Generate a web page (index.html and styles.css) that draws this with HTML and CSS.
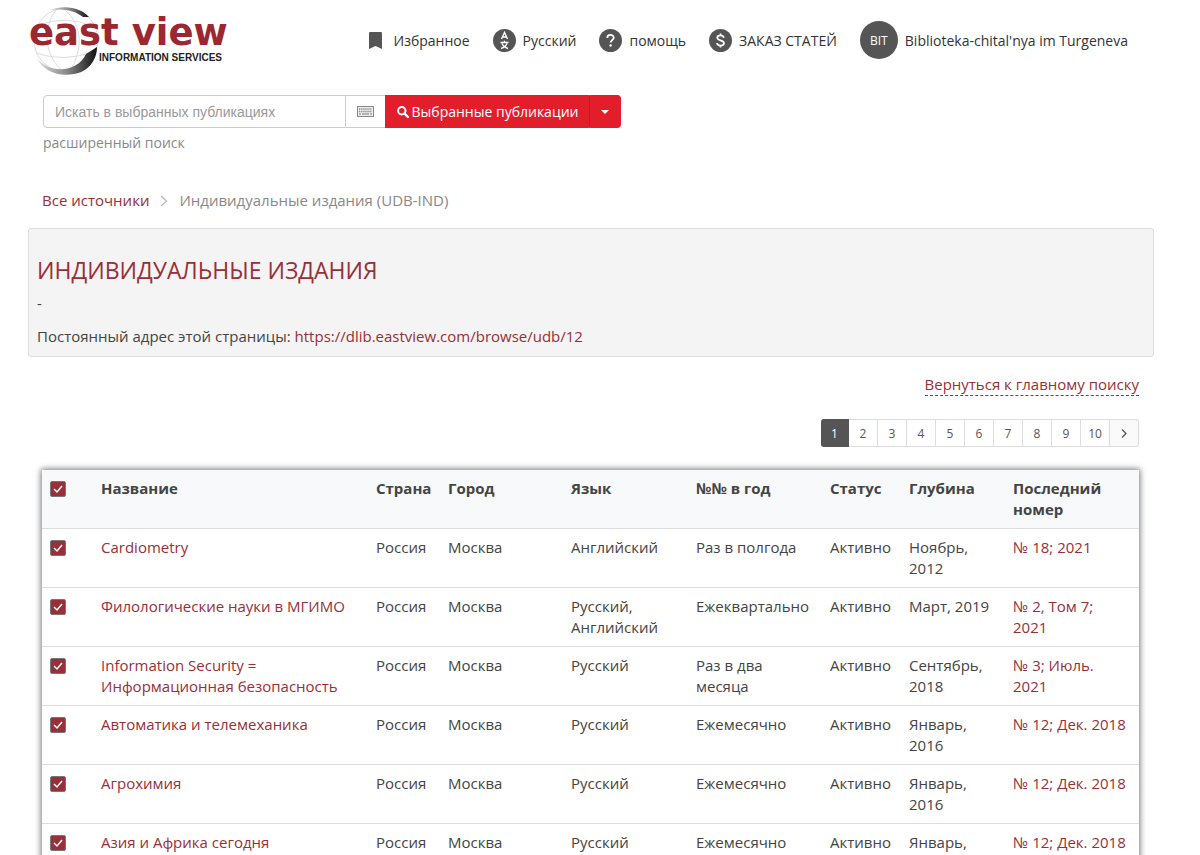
FILE: index.html
```html
<!DOCTYPE html>
<html lang="ru">
<head>
<meta charset="utf-8">
<meta name="viewport" content="width=device-width, initial-scale=1">
<title>Индивидуальные издания</title>
<link rel="stylesheet" href="styles.css">
</head>
<body>
<div class="page">
  <header class="header">
    <a class="logo" href="#" aria-label="East View Information Services">
      <svg width="204" height="72" viewBox="0 0 204 72">
        <defs>
          <linearGradient id="rim" x1="0" y1="0" x2="1" y2="0">
            <stop offset="0" stop-color="#ddd"/><stop offset=".5" stop-color="#888"/><stop offset="1" stop-color="#111"/>
          </linearGradient>
        </defs>
        <g fill="none" stroke="#ddd" stroke-width="1">
          <circle cx="38" cy="36" r="32"/>
          <path d="M30 4C14 20 15 52 36 68M34 4C55 18 56 46 41 68M11 21Q38 11 64 22M8 49Q36 59 68 47"/>
        </g>
        <path d="M22 6C36 0 54 4 61 13L55 13C48 7 36 4 22 6Z" fill="url(#rim)"/>
        <path d="M9 54C22 71 50 68 58 50L69 43C69 56 60 68 46 70C30 73 15 67 9 54Z" fill="url(#rim)"/>
        <text class="logo-name" x="1" y="41">east view</text>
        <text class="logo-sub" x="71" y="57">INFORMATION SERVICES</text>
      </svg>
    </a>
    <nav class="nav">
      <a class="nav-item nav-item-bookmark" href="#">
        <svg width="13" height="17" viewBox="0 0 13 17"><path d="M1 0h11a1 1 0 0 1 1 1v16l-6.500-3L0 17V1a1 1 0 0 1 1-1z" fill="#555"/></svg>
        Избранное</a>
      <a class="nav-item" href="#">
        <svg width="23" height="23" viewBox="0 0 23 23"><circle cx="11.500" cy="11.500" r="11.500" fill="#555"/><g fill="none" stroke="#fff" stroke-width="1.400"><path d="M8.500 10L11.500 3.500L14.500 10M9.500 8h4M7.500 13.500h8M11.500 11.700v2M9 14.500C10 17 12 18.500 15 19.500M14 14.500C13 17 11 18.500 8 19.500"/></g></svg>
        Русский</a>
      <a class="nav-item" href="#">
        <svg width="23" height="23" viewBox="0 0 23 23"><circle cx="11.500" cy="11.500" r="11.500" fill="#555"/><path d="M8.300 9C8.300 5 14.700 5 14.700 8.800C14.700 11 11.600 11.200 11.600 13.600" fill="none" stroke="#fff" stroke-width="1.800"/><circle cx="11.600" cy="16.500" r="1.200" fill="#fff"/></svg>
        помощь</a>
      <a class="nav-item" href="#">
        <svg width="23" height="23" viewBox="0 0 23 23"><circle cx="11.500" cy="11.500" r="11.500" fill="#555"/><path d="M14.900 8.700C14.200 5.700 8.300 5.700 8.300 8.800C8.300 12 15 10.700 15 14.200C15 17.600 8.300 17.400 8 14M11.500 4.500v2.500M11.500 16v2.500" fill="none" stroke="#fff" stroke-width="1.700"/></svg>
        ЗАКАЗ СТАТЕЙ</a>
      <a class="nav-item" href="#"><span class="avatar">BIT</span>Biblioteka-chital'nya im Turgeneva</a>
    </nav>
  </header>

  <form class="search">
    <div class="search-row">
      <input class="search-input" type="text" placeholder="Искать в выбранных публикациях" aria-label="Поиск">
      <button class="search-keys" type="button" aria-label="Клавиатура">
        <svg width="17" height="11" viewBox="0 0 17 11"><rect x=".5" y=".5" width="16" height="10" fill="#eee" stroke="#888"/><path d="M2 3h13M2 5.500h13" stroke="#888" stroke-width="1.300" stroke-dasharray="1.300 .8"/><path d="M2 8h2M5 8h7M13 8h2" stroke="#777"/></svg>
      </button>
      <button class="search-submit" type="submit">
        <svg width="12" height="12" viewBox="0 0 12 12"><circle cx="4.800" cy="4.800" r="3.700" fill="none" stroke="#fff" stroke-width="2"/><path d="M7.500 7.500L11 11" stroke="#fff" stroke-width="2.400" stroke-linecap="round"/></svg>
        Выбранные публикации</button>
      <button class="search-more" type="button" aria-label="Ещё"><svg width="8" height="4" viewBox="0 0 8 4"><path d="M0 0h8L4 4z" fill="#fff"/></svg></button>
    </div>
    <a class="search-advanced" href="#">расширенный поиск</a>
  </form>

  <nav class="crumbs">
    <a href="#">Все источники</a>
    <svg width="8" height="12" viewBox="0 0 8 12"><path d="M1 1l5.500 5L1 11" fill="none" stroke="#bbb" stroke-width="1.300"/></svg>
    <span>Индивидуальные издания (UDB-IND)</span>
  </nav>

  <section class="panel">
    <h1>ИНДИВИДУАЛЬНЫЕ ИЗДАНИЯ</h1>
    <p>-</p>
    <p>Постоянный адрес этой страницы: <a href="#">https://dlib.eastview.com/browse/udb/12</a></p>
  </section>

  <main class="results">
    <a class="back" href="#">Вернуться к главному поиску</a>
    <nav class="pager">
      <a class="current" href="#">1</a><a href="#">2</a><a href="#">3</a><a href="#">4</a><a href="#">5</a><a href="#">6</a><a href="#">7</a><a href="#">8</a><a href="#">9</a><a href="#">10</a><a class="next" href="#" aria-label="Далее"><svg width="6" height="9" viewBox="0 0 6 9"><path d="M1 .5l4 4-4 4" fill="none" stroke="#555" stroke-width="1.300"/></svg></a>
    </nav>
    <table class="table">
      <colgroup><col class="c-check"><col><col class="c-country"><col class="c-city"><col class="c-lang"><col class="c-freq"><col class="c-status"><col class="c-depth"><col class="c-last"></colgroup>
      <thead>
        <tr><th><input type="checkbox" checked aria-label="Выбрать все"></th><th>Название</th><th>Страна</th><th>Город</th><th>Язык</th><th>№№ в год</th><th>Статус</th><th>Глубина</th><th>Последний номер</th></tr>
      </thead>
      <tbody>
        <tr><td><input type="checkbox" checked aria-label="Cardiometry"></td><td><a href="#">Cardiometry</a></td><td>Россия</td><td>Москва</td><td>Английский</td><td>Раз в полгода</td><td>Активно</td><td>Ноябрь, 2012</td><td><a href="#">№ 18; 2021</a></td></tr>
        <tr><td><input type="checkbox" checked aria-label="Филологические науки в МГИМО"></td><td><a href="#">Филологические науки в МГИМО</a></td><td>Россия</td><td>Москва</td><td>Русский, Английский</td><td>Ежеквартально</td><td>Активно</td><td>Март, 2019</td><td><a href="#">№ 2, Том 7; 2021</a></td></tr>
        <tr><td><input type="checkbox" checked aria-label="Information Security"></td><td><a href="#">Information Security = Информационная безопасность</a></td><td>Россия</td><td>Москва</td><td>Русский</td><td>Раз в два месяца</td><td>Активно</td><td>Сентябрь, 2018</td><td><a href="#">№ 3; Июль. 2021</a></td></tr>
        <tr><td><input type="checkbox" checked aria-label="Автоматика и телемеханика"></td><td><a href="#">Автоматика и телемеханика</a></td><td>Россия</td><td>Москва</td><td>Русский</td><td>Ежемесячно</td><td>Активно</td><td>Январь, 2016</td><td><a href="#">№ 12; Дек. 2018</a></td></tr>
        <tr><td><input type="checkbox" checked aria-label="Агрохимия"></td><td><a href="#">Агрохимия</a></td><td>Россия</td><td>Москва</td><td>Русский</td><td>Ежемесячно</td><td>Активно</td><td>Январь, 2016</td><td><a href="#">№ 12; Дек. 2018</a></td></tr>
        <tr><td><input type="checkbox" checked aria-label="Азия и Африка сегодня"></td><td><a href="#">Азия и Африка сегодня</a></td><td>Россия</td><td>Москва</td><td>Русский</td><td>Ежемесячно</td><td>Активно</td><td>Январь, 2016</td><td><a href="#">№ 12; Дек. 2018</a></td></tr>
      </tbody>
    </table>
  </main>
</div>
</body>
</html>
```
FILE: styles.css
```css
* { box-sizing: border-box; }
html { scrollbar-width: none; }
body {
  margin: 0;
  background: #fff;
  color: #444;
  font: 15px/21px "Open Sans", "Noto Sans", sans-serif;
}
a { color: #982f39; text-decoration: none; }
svg { flex: none; display: block; }
.page { padding: 4px 46px 0 28px; }

.header { display: flex; justify-content: space-between; align-items: center; }
.logo-name { font: bold 37px "DejaVu Sans", sans-serif; fill: #9b2730; }
.logo-sub { font: bold 10px "Liberation Sans", Arial, sans-serif; fill: #222; }
.nav { display: flex; align-items: center; gap: 23px; padding-right: 26px; font-size: 14px; }
.nav-item { display: flex; align-items: center; gap: 7px; color: #333; white-space: nowrap; }
.nav-item-bookmark { gap: 12px; }
.avatar {
  display: flex; align-items: center; justify-content: center;
  width: 38px; height: 38px; border-radius: 50%;
  background: #555; color: #fff; font-size: 12px;
}

.search { padding: 19px 15px 0; }
.search-row { display: flex; height: 33px; }
.search-input {
  width: 303px; padding: 0 11px;
  border: 1px solid #ccc; border-radius: 4px 0 0 4px;
  font: 14px "Liberation Sans", Arial, sans-serif;
}
.search-input::placeholder { color: #999; }
.search-keys {
  display: flex; align-items: center; justify-content: center;
  width: 39px; padding: 0; background: #fff;
  border: 1px solid #ccc; border-width: 1px 0;
}
.search-submit, .search-more {
  display: flex; align-items: center; justify-content: center;
  border: 1px solid #e31e2b; background: #e31e2b; color: #fff;
  font: 14px "Open Sans", sans-serif;
}
.search-submit { width: 204px; gap: 3px; padding: 0; border-right: 0; white-space: nowrap; }
.search-more { width: 32px; padding: 0; border-left-color: #c41824; border-radius: 0 4px 4px 0; }
.search-advanced { display: inline-block; padding-top: 4px; font-size: 14px; color: #888; }

.crumbs { display: flex; align-items: center; gap: 11px; padding: 37px 14px 17px; color: #888; }

.panel {
  padding: 25px 8px 9px;
  border: 1px solid #ddd; border-radius: 3px; background: #f4f4f4;
}
.panel h1 { margin: 0 0 7px; font-size: 23px; line-height: 32px; font-weight: 400; color: #982f39; }
.panel p { margin: 0 0 12px; }
.panel p:last-child { margin: 0; }

.results { display: flex; flex-direction: column; align-items: flex-end; padding: 17px 15px 0 14px; }
.back { border-bottom: 1px dashed #982f39; }
.pager { display: flex; margin: 23px 0; font-size: 12px; }
.pager a {
  display: flex; align-items: center; justify-content: center;
  width: 29px; height: 28px; border: 1px solid #ddd; border-left-width: 0;
  color: #555;
}
.pager .current { width: 28px; background: #555; border-color: #555; color: #fff; border-radius: 3px 0 0 3px; }
.pager .next { background: #fafafa; border-radius: 0 3px 3px 0; }

.table {
  width: 100%; table-layout: fixed; border-collapse: separate; border-spacing: 0;
  box-shadow: 0 0 6px 1px #777;
}
.c-check { width: 51px; }
.c-country { width: 72px; }
.c-city { width: 123px; }
.c-lang { width: 125px; }
.c-freq { width: 134px; }
.c-status { width: 79px; }
.c-depth { width: 104px; }
.c-last { width: 134px; }
th, td { padding: 8px; text-align: left; vertical-align: top; border-bottom: 1px solid #ddd; }
th:last-child, td:last-child { padding-right: 10px; }
th { background: #f7f9fa; font-weight: 700; }
input[type="checkbox"] {
  appearance: none; display: block; width: 16px; height: 16px; margin: 3px 0 0;
  border: 1px solid #777; border-radius: 2px;
  background: #982f39 url("data:image/svg+xml,%3Csvg xmlns='http://www.w3.org/2000/svg' viewBox='0 0 14 14'%3E%3Cpath d='M3 7l3 3 5-6' fill='none' stroke='white' stroke-width='1.500'/%3E%3C/svg%3E") center / 14px;
}
```
